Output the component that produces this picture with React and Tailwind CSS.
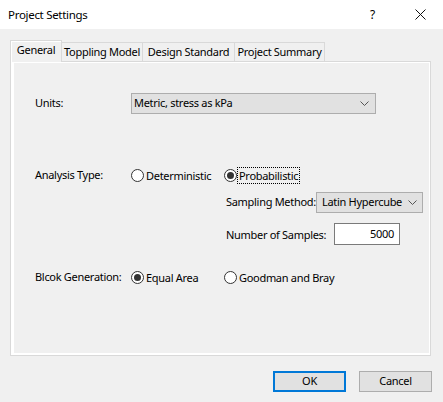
import React from "react";

const font = { fontFamily: '"Segoe UI", "Noto Sans", sans-serif' };

function Chevron() {
  return (
    <svg width="9" height="5" viewBox="0 0 9 5" className="shrink-0">
      <path d="M0.5 0.5 L4.5 4.5 L8.5 0.5" fill="none" stroke="#555" strokeWidth="1" />
    </svg>
  );
}

function Radio({ checked, label, focus, className = "" }) {
  return (
    <div className={`flex items-center h-[17px] whitespace-nowrap ${className}`}>
      <span className="w-[13px] h-[13px] rounded-full border border-[#333] bg-white flex items-center justify-center shrink-0">
        {checked && <span className="w-[7px] h-[7px] rounded-full bg-[#333]" />}
      </span>
      <span
        className={`ml-[1px] leading-[15px] px-[1px] ${
          focus ? "outline outline-1 outline-dotted outline-black" : ""
        }`}
      >
        {label}
      </span>
    </div>
  );
}

export default function App() {
  const tabs = [
    { name: "Toppling Model", w: "w-[81px]" },
    { name: "Design Standard", w: "w-[92px]" },
    { name: "Project Summary", w: "w-[90px]" },
  ];

  return (
    <div
      className="w-[443px] h-[402px] bg-[#f0f0f0] flex flex-col text-[11px] tracking-[-0.3px] text-black overflow-hidden whitespace-nowrap"
      style={font}
    >
      {/* Title bar */}
      <div className="h-[29px] bg-white flex items-center shrink-0">
        <span className="pl-[8px] flex-1 text-[11.5px]">Project Settings</span>
        <span className="w-[12px] text-[12px] mr-[33px]">?</span>
        <svg width="11" height="11" viewBox="0 0 11 11" className="mr-[17px]">
          <path d="M0.5 0.5 L10.5 10.5 M10.5 0.5 L0.5 10.5" stroke="#111" strokeWidth="1" />
        </svg>
      </div>

      {/* Tabs */}
      <div className="pl-[10px] pt-[11px] flex items-end h-[32px] shrink-0">
        <div className="w-[52px] h-[22px] bg-[#f0f0f0] border-l border-t border-r border-[#d9d9d9] shadow-[inset_1px_1px_0_#fff] flex items-center justify-center relative z-10 -mb-[1px]">
          <span className="-mt-[3px]">General</span>
        </div>
        {tabs.map((t) => (
          <div
            key={t.name}
            className={`${t.w} h-[19px] bg-[#f0f0f0] border-t border-r border-[#d9d9d9] flex items-center justify-center`}
          >
            {t.name}
          </div>
        ))}
      </div>

      {/* Panel */}
      <div className="ml-[10px] w-[421px] h-[295px] border border-[#d9d9d9] shrink-0">
        <div className="w-full h-full border-l-[3px] border-t border-r-[1px] border-b-[2px] border-white pl-[21px]">
          {/* Units */}
          <div className="flex items-center h-[21px] mt-[30px]">
            <span className="w-[96px]">Units:</span>
            <div className="w-[245px] h-[21px] bg-[#e1e1e1] border border-[#adadad] flex items-center pl-[2px] pr-[6px]">
              <span className="flex-1">Metric, stress as kPa</span>
              <Chevron />
            </div>
          </div>

          {/* Analysis type */}
          <div className="flex items-center h-[17px] mt-[53px]">
            <span className="w-[96px]">Analysis Type:</span>
            <Radio label="Deterministic" className="w-[93px]" />
            <Radio label="Probabilistic" checked focus />
          </div>

          <div className="flex items-center h-[21px] mt-[8px] ml-[191px]">
            <span className="w-[90px]">Sampling Method:</span>
            <div className="w-[107px] h-[21px] bg-[#e1e1e1] border border-[#adadad] flex items-center pl-[5px] pr-[5px]">
              <span className="flex-1">Latin Hypercube</span>
              <Chevron />
            </div>
          </div>

          <div className="flex items-center h-[22px] mt-[10px] ml-[191px]">
            <span className="w-[108px] mt-[2px]">Number of Samples:</span>
            <div className="w-[66px] h-[22px] bg-white border border-[#7a7a7a] flex items-center justify-end pr-[5px]">
              5000
            </div>
          </div>

          {/* Block generation */}
          <div className="flex items-center h-[17px] mt-[24px]">
            <span className="w-[96px]">Blcok Generation:</span>
            <Radio label="Equal Area" checked className="w-[93px]" />
            <Radio label="Goodman and Bray" />
          </div>
        </div>
      </div>

      {/* Buttons */}
      <div className="flex justify-end gap-[13px] pr-[11px] mt-[15px]">
        <button className="w-[73px] h-[21px] bg-[#e1e1e1] border-2 border-[#0078d7] flex items-center justify-center">
          OK
        </button>
        <button className="w-[73px] h-[21px] bg-[#e1e1e1] border border-[#adadad] flex items-center justify-center">
          Cancel
        </button>
      </div>
    </div>
  );
}
